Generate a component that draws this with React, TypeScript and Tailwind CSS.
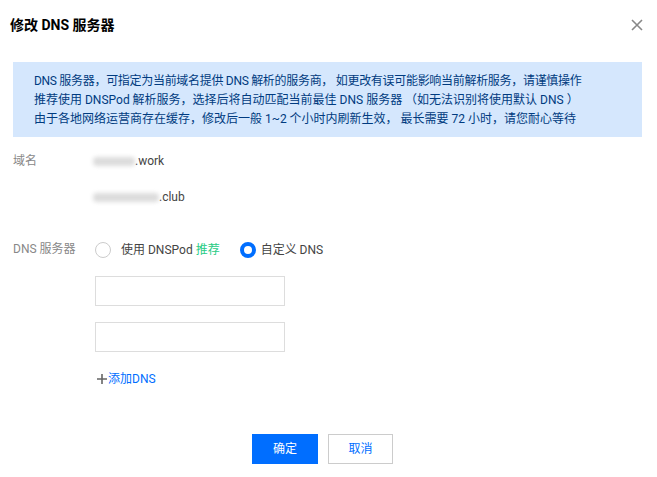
import React from 'react'

export default function App() {
  return (
    <div className="w-[657px] h-[477px] bg-white text-[12px] text-[#333] overflow-hidden" style={{ fontFamily: 'Roboto, "Noto Sans CJK SC", sans-serif' }}>
      {/* Header */}
      <div className="flex items-center justify-between pl-[10px] pr-[13px] h-[50px]">
        <h3 className="text-[14px] font-bold text-[#000]">修改 DNS 服务器</h3>
        <svg width="14" height="14" viewBox="0 0 14 14" className="text-[#888]">
          <path d="M2 2 L12 12 M12 2 L2 12" stroke="currentColor" strokeWidth="1.6" />
        </svg>
      </div>

      {/* Notice */}
      <div className="mx-[13px] mt-[12px] w-[629px] h-[75px] bg-[#d5e7fd] text-[#003b80] pl-[21px] pt-[10px] leading-[19px]">
        <p className="tracking-[-0.3px]">DNS 服务器，可指定为当前域名提供 DNS 解析的服务商， 如更改有误可能影响当前解析服务，请谨慎操作</p>
        <p>推荐使用 DNSPod 解析服务，选择后将自动匹配当前最佳 DNS 服务器 （如无法识别将使用默认 DNS ）</p>
        <p>由于各地网络运营商存在缓存，修改后一般 1~2 个小时内刷新生效， 最长需要 72 小时，请您耐心等待</p>
      </div>

      {/* Form */}
      <div className="pl-[13px] mt-[15px]">
        <div className="flex">
          <div className="w-[80px] text-[#888] leading-[18px]">域名</div>
          <div className="flex flex-col gap-[18px] leading-[18px]">
            <div className="flex items-center">
              <span className="inline-block w-[42px] h-[9px] bg-[#dcdcdc] blur-[2px] rounded-sm" />
              <span className="text-[#444]">.work</span>
            </div>
            <div className="flex items-center">
              <span className="inline-block w-[66px] h-[9px] bg-[#dcdcdc] blur-[2px] rounded-sm" />
              <span className="text-[#444]">.club</span>
            </div>
          </div>
        </div>

        <div className="flex mt-[34px]">
          <div className="w-[82px] text-[#888] leading-[18px]">DNS 服务器</div>
          <div className="flex flex-col">
            <div className="flex items-center h-[18px] mt-[1px]">
              <span className="w-[16px] h-[16px] rounded-full border border-[#ccc] bg-white" />
              <span className="ml-[10px] text-[#444]">使用 DNSPod <span className="text-[#29cc85]">推荐</span></span>
              <span className="ml-[20px] w-[16px] h-[16px] rounded-full border-[4px] border-[#006eff] bg-white" />
              <span className="ml-[5px] text-[#444]">自定义 DNS</span>
            </div>
            <input className="mt-[17px] w-[190px] h-[30px] border border-[#ddd] outline-none" />
            <input className="mt-[16px] w-[190px] h-[30px] border border-[#ddd] outline-none" />
            <div className="flex items-center mt-[18px] ml-[2px] text-[#006eff]">
              <svg width="10" height="10" viewBox="0 0 10 10" className="text-[#666]">
                <path d="M5 0 V10 M0 5 H10" stroke="currentColor" strokeWidth="1.6" />
              </svg>
              <span className="ml-[1px]">添加DNS</span>
            </div>
          </div>
        </div>
      </div>

      {/* Footer */}
      <div className="flex justify-center gap-[10px] mt-[46px] pr-[12px]">
        <button className="w-[66px] h-[30px] bg-[#006eff] text-white">确定</button>
        <button className="w-[65px] h-[30px] border border-[#ccc] text-[#006eff] bg-white">取消</button>
      </div>
    </div>
  )
}
